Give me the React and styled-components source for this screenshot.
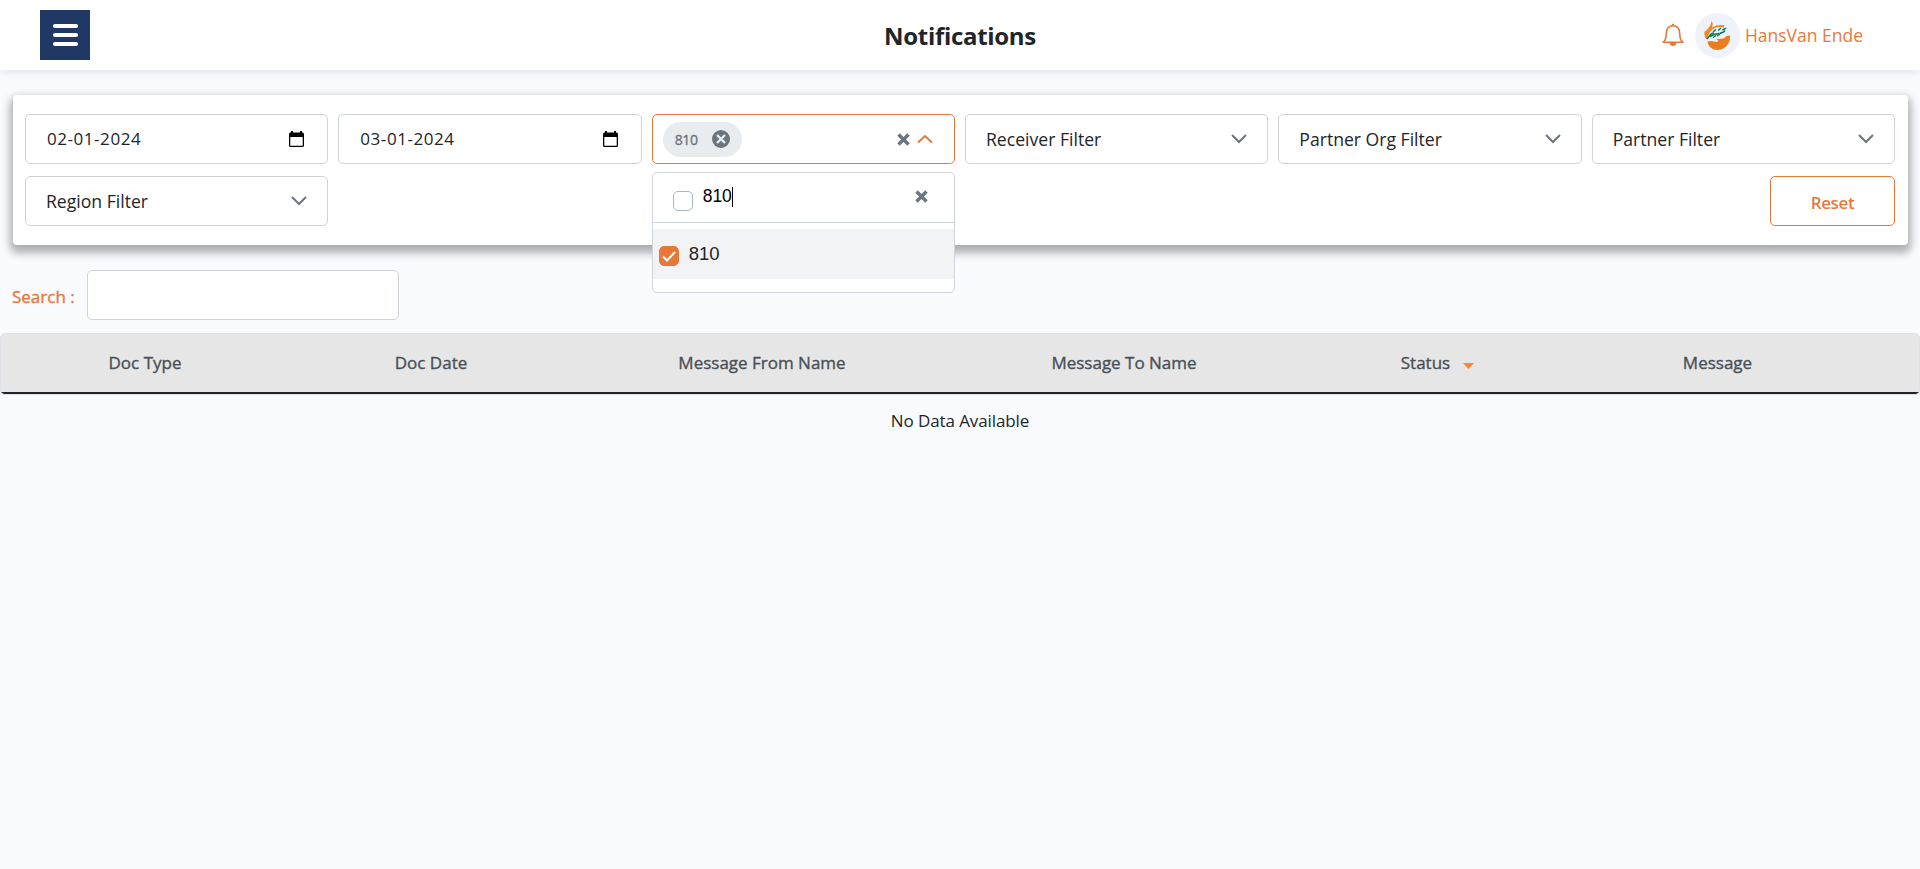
import React from "react";
import styled, { createGlobalStyle } from "styled-components";

const ORANGE = "#e87839";

const Global = createGlobalStyle`
  * { box-sizing: border-box; }
  body {
    margin: 0;
    background: #fafbff;
    color: #212529;
    font-family: "Open Sans", "Noto Sans", sans-serif;
    font-size: 17px;
    line-height: 1.5;
    overflow: hidden;
  }
`;

const Page = styled.div`
  min-height: 869px;
  display: flex;
  flex-direction: column;
`;

const Header = styled.header`
  height: 70px;
  padding: 0 40px;
  display: grid;
  grid-template-columns: 1fr auto 1fr;
  align-items: center;
  background: #fff;
  box-shadow: 0 0 10px rgba(18, 38, 80, 0.16);
`;

const MenuButton = styled.button`
  width: 50px;
  height: 50px;
  padding: 0;
  border: 0;
  display: flex;
  flex-direction: column;
  align-items: center;
  justify-content: center;
  gap: 5px;
  background: #203864;
`;

const Bar = styled.span`
  width: 25px;
  height: 4px;
  margin-left: 1px;
  border-radius: 2px;
  background: #fff;
`;

const Title = styled.h1`
  margin: 2px 0 0;
  font-size: 24px;
  line-height: 36px;
  font-weight: 700;
  letter-spacing: -0.3px;
`;

const User = styled.div`
  justify-self: end;
  margin-right: 17px;
  display: flex;
  align-items: center;
  color: ${ORANGE};
`;

const Bell = styled.svg`
  margin-right: 11px;
`;

const Avatar = styled.div`
  width: 45px;
  height: 45px;
  margin-right: 5px;
  border-radius: 50%;
  background: #eff2fa;
  display: grid;
  place-items: center;
`;

const Label = styled.span`
  white-space: nowrap;
  font-size: ${(p) => p.$size || 17}px;
  font-weight: ${(p) => p.$weight || 400};
  letter-spacing: ${(p) => p.$track || 0}px;
  -webkit-text-stroke: ${(p) => (p.$medium ? "0.35px currentColor" : "0")};
`;

const Panel = styled.section`
  margin: 25px 12px 0 13px;
  height: 150px;
  padding: 19px 13px 19px 12px;
  border-radius: 4px;
  background: #fff;
  box-shadow: 0 5px 9px 3px rgba(0, 0, 0, 0.31);
  display: grid;
  grid-template-columns: repeat(6, 1fr);
  grid-template-rows: 50px 50px;
  gap: 12px 10px;
`;

const Field = styled.div`
  position: relative;
  height: 50px;
  padding: 0 20px;
  border: 1px solid ${(p) => (p.$active ? ORANGE : "#ced4da")};
  border-radius: 5px;
  background: #fff;
  display: flex;
  align-items: center;
  justify-content: space-between;
`;

const DateField = styled(Field)`
  padding: 0 23px 0 21px;
`;

const SelectField = styled(Field)`
  padding: 0 21px 0 10px;
`;

const Chip = styled.div`
  height: 35px;
  width: 79px;
  padding: 0 12px;
  border-radius: 18px;
  background: #e9ecef;
  color: #6c757d;
  display: flex;
  align-items: center;
  justify-content: space-between;
`;

const Controls = styled.div`
  display: flex;
  align-items: center;
  gap: 7px;
`;

const Dropdown = styled.div`
  position: absolute;
  z-index: 2;
  top: 57px;
  left: -1px;
  right: -1px;
  height: 121px;
  border: 1px solid #ced4da;
  border-radius: 5px;
  background: #fff;
  font-family: "Liberation Sans", sans-serif;
`;

const DropdownSearch = styled.div`
  height: 50px;
  padding: 0 26px 2px 20px;
  border-bottom: 1px solid #ced4da;
  display: flex;
  align-items: center;
  color: #000;
`;

const Check = styled.span`
  width: 20px;
  height: 20px;
  margin: ${(p) => (p.$on ? "4px 10px 0 0" : "8px 10px 0 0")};
  border: 1px solid ${(p) => (p.$on ? ORANGE : "#adb5bd")};
  border-radius: 5px;
  background: ${(p) => (p.$on ? ORANGE : "#fff")};
  display: grid;
  place-items: center;
`;

const Caret = styled.span`
  width: 1px;
  height: 20px;
  margin-right: auto;
  background: #000;
`;

const Option = styled.div`
  height: 50px;
  margin-top: 6px;
  padding-left: 6px;
  background: #f1f3f5;
  display: flex;
  align-items: center;
`;

const ResetButton = styled.button`
  grid-column: 6;
  justify-self: end;
  width: 125px;
  height: 50px;
  padding: 3px 0 0;
  border: 1px solid ${ORANGE};
  border-radius: 5px;
  background: #fff;
  color: ${ORANGE};
  font-family: inherit;
`;

const SearchRow = styled.div`
  margin: 25px 0 13px 12px;
  display: flex;
  align-items: center;
  color: ${ORANGE};
`;

const SearchLabel = styled.label`
  width: 75px;
  padding-top: 3px;
`;

const SearchInput = styled.input`
  width: 312px;
  height: 50px;
  border: 1px solid #ced4da;
  border-radius: 5px;
  background: #fff;
`;

const TableHead = styled.div`
  height: 62px;
  border: 1px solid #dee2e6;
  border-radius: 5px;
  background: #e6e6e6;
  color: #495057;
  overflow: hidden;
`;

const HeadRow = styled.div`
  height: 60px;
  border-bottom: 2px solid #212529;
  display: grid;
  grid-template-columns: 288px 284px 378px 346px 281px 279px;
  align-items: center;
`;

const HeadCell = styled.div`
  display: flex;
  align-items: center;
  justify-content: center;
  gap: 13px;
`;

const SortArrow = styled.svg`
  margin-top: 6px;
`;

const Empty = styled.div`
  padding-top: 13px;
  text-align: center;
`;

const Chevron = ({ up }) => (
  <svg width="16" height="10" viewBox="0 0 16 10" fill="none" stroke={up ? ORANGE : "#6c757d"} strokeWidth="2">
    <path d={up ? "M1 8.5 8 2l7 6.5" : "M1 1l7 7 7-7"} />
  </svg>
);

const Cross = () => (
  <svg width="13" height="13" viewBox="0 0 13 13" stroke="#6c757d" strokeWidth="3.4">
    <path d="M1.5 1.5l10 10M11.5 1.5l-10 10" />
  </svg>
);

const Calendar = () => (
  <svg width="15" height="17" viewBox="0 0 15 17">
    <path fill="#000" fillRule="evenodd" d="M2 0h2v1.500h7V0h2v1.500h.5A1.500 1.500 0 0 1 15 3v11.500a1.500 1.500 0 0 1-1.500 1.500h-12A1.500 1.500 0 0 1 0 14.500V3a1.500 1.500 0 0 1 1.500-1.500H2zM1.300 6v8.700h12.400V6z" />
  </svg>
);

const filters = ["Receiver Filter", "Partner Org Filter", "Partner Filter", "Region Filter"];

const columns = ["Doc Type", "Doc Date", "Message From Name", "Message To Name", "Status", "Message"];

export default function App() {
  return (
    <Page>
      <Global />
      <Header>
        <MenuButton aria-label="Menu"><Bar /><Bar /><Bar /></MenuButton>
        <Title>Notifications</Title>
        <User>
          <Bell width="22" height="24" viewBox="0 0 22 24" fill="none" stroke={ORANGE} strokeWidth="1.6">
            <path d="M1 19.3C4 17.5 4.2 14 4.3 10.500 4.400 5.500 7 2.700 11 2.700s6.600 2.800 6.700 7.800c.1 3.500.3 7 3.300 8.800z" strokeLinejoin="round" />
            <path d="M10 1.500h2M8.500 20.500c.3 2.300 4.700 2.300 5 0z" fill={ORANGE} />
          </Bell>
          <Avatar>
            <svg width="27" height="29" viewBox="0 0 27 29">
              <path fill="#f08a24" d="M7.500 0C9 2 9 4 8 6.500c4-2.500 8-3 12.500-2.200L19.500 6.500C14 5 9 7 6 11 4.500 13.500 4 16 2.500 18.500.5 16 0 12.500.5 10.500 3 9.500 7 5 7.500 0z" />
              <path fill="#eb7d1f" d="M3.500 20.500c4-1.500 6.500.2 9.500.2 2-.2 1.500-1.700-1-2.200 4-1.500 8 .5 10.500-3.500l3.500-.5c1 6-4 14.500-12 14.500-5.500 0-10-3.500-10.500-8.500z" />
              <path fill="none" stroke="#0a7a50" strokeWidth="1.500" d="M3 18l4-5 3-1.500M9 11l3-2.500M14 9.500l3-2.500M18.500 9l3.500-1.800M6 15.500l4-2 5-1M9 16.500l3-2M15.500 12.500l4-1.500 1.500-1.500M13 15l3-2" />
            </svg>
          </Avatar>
          <Label $size={17.5}>HansVan Ende</Label>
        </User>
      </Header>
      <Panel>
        {["02-01-2024", "03-01-2024"].map((d) => (
          <DateField key={d}><Label $track={0.55}>{d}</Label><Calendar /></DateField>
        ))}
        <SelectField $active>
          <Chip>
            <Label $size={14} $track={-0.3} $medium>810</Label>
            <svg width="18" height="18" viewBox="0 0 18 18">
              <circle cx="9" cy="9" r="9" fill="#6c757d" />
              <path d="M5 5l8 8M13 5l-8 8" stroke="#e9ecef" strokeWidth="2.4" />
            </svg>
          </Chip>
          <Controls><Cross /><Chevron up /></Controls>
          <Dropdown>
            <DropdownSearch>
              <Check /><Label $size={17.5}>810</Label><Caret /><Cross />
            </DropdownSearch>
            <Option>
              <Check $on>
                <svg width="14" height="11" viewBox="0 0 14 11" fill="none" stroke="#fff" strokeWidth="2"><path d="M1 5.5l4 4L13 1" /></svg>
              </Check>
              <Label $size={18.5}>810</Label>
            </Option>
          </Dropdown>
        </SelectField>
        {filters.map((text) => (
          <Field key={text}><Label $size={17.6}>{text}</Label><Chevron /></Field>
        ))}
        <ResetButton><Label $weight={600} $track={-0.4}>Reset</Label></ResetButton>
      </Panel>
      <SearchRow>
        <SearchLabel><Label $medium>Search :</Label></SearchLabel>
        <SearchInput />
      </SearchRow>
      <TableHead>
        <HeadRow>
          {columns.map((text) => (
            <HeadCell key={text}>
              <Label $medium>{text}</Label>
              {text === "Status" && <SortArrow width="11" height="6" viewBox="0 0 11 6"><path fill="#fd8633" d="M0 0h11L5.5 6z" /></SortArrow>}
            </HeadCell>
          ))}
        </HeadRow>
      </TableHead>
      <Empty><Label $track={-0.1}>No Data Available</Label></Empty>
    </Page>
  );
}
